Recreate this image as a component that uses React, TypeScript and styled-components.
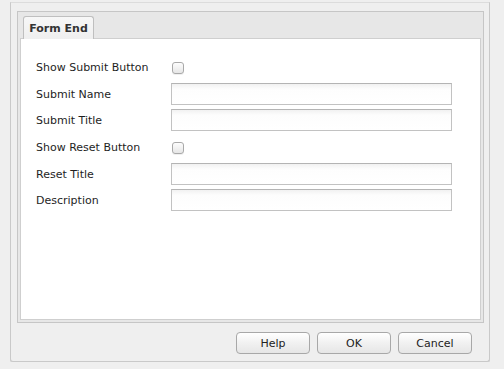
import React from "react";
import styled, { createGlobalStyle } from "styled-components";

const GlobalStyle = createGlobalStyle`
  html, body {
    margin: 0;
    padding: 0;
    background: #efefef;
    font-family: "DejaVu Sans", "Noto Sans", sans-serif;
    color: #222;
  }
`;

// dialog frame
const Frame = styled.div({
    boxSizing: 'border-box',
    width: '480px',
    height: '360px',
    margin: '2px 0 0 10px',
    border: '1px solid #c9c9c9',
    borderTopColor: '#dcdcdc',
    borderRadius: '0 0 3px 3px',
    boxShadow: '0 1px 0 #dadada',
    background: '#efefef',
    padding: '8px 5px 0 6px',
    display: 'flex',
    flexDirection: 'column',
})

const TabPanel = styled.div({
    boxSizing: 'border-box',
    height: '312px',
    border: '1px solid #c6c6c6',
    background: '#e7e7e7',
    display: 'flex',
    flexDirection: 'column',
    padding: '0 2px 2px 2px',
})

const TabStrip = styled.div({
    height: '26px',
    display: 'flex',
    alignItems: 'flex-end',
    padding: '0 0 0 3px',
})

const Tab = styled.div({
    boxSizing: 'border-box',
    width: '71px',
    height: '23px',
    marginBottom: '-1px',
    border: '1px solid #bfbfbf',
    borderBottom: 'none',
    borderRadius: '3px 3px 0 0',
    background: 'linear-gradient(#f7f7f7, #efefef)',
    fontSize: '11px',
    fontWeight: 'bold',
    color: '#333',
    display: 'flex',
    alignItems: 'center',
    justifyContent: 'center',
    position: 'relative',
    zIndex: 1,
})

const Content = styled.div({
    flex: 1,
    background: '#fff',
    border: '1px solid #cfcfcf',
    padding: '16px 0 0 15px',
})

const Form = styled.div({
    display: 'grid',
    gridTemplateColumns: '135px 281px',
    rowGap: '4px',
})

// checkbox rows are a little taller than text rows
const Label = styled.div<{ $tall?: boolean }>(props => ({
    height: props.$tall ? '24px' : '22px',
    display: 'flex',
    alignItems: 'center',
    fontSize: '11px',
    color: '#1e1e1e',
}))

const Field = styled.div<{ $tall?: boolean }>(props => ({
    height: props.$tall ? '24px' : '22px',
    display: 'flex',
    alignItems: 'center',
}))

const TextBox = styled.input({
    boxSizing: 'border-box',
    width: '281px',
    height: '22px',
    margin: 0,
    border: '1px solid #c2c2c2',
    borderTopColor: '#b4b4b4',
    background: 'linear-gradient(#f1f1f1, #fdfdfd 5px, #fff)',
    outline: 'none',
})

const CheckBox = styled.input({
    appearance: 'none',
    boxSizing: 'border-box',
    width: '12px',
    height: '12px',
    margin: '2px 0 0 1px',
    border: '1px solid #a9a9a9',
    borderRadius: '3px',
    background: 'linear-gradient(#fdfdfd, #e6e6e6)',
    boxShadow: '0 1px 0 #f0f0f0',
})

const Footer = styled.div({
    display: 'flex',
    justifyContent: 'flex-end',
    gap: '7px',
    padding: '9px 12px 0 0',
})

const Button = styled.button({
    boxSizing: 'border-box',
    width: '74px',
    height: '22px',
    border: '1px solid #a8a8a8',
    borderRadius: '4px',
    background: 'linear-gradient(#ffffff, #f1f1f1 50%, #e6e6e6)',
    fontFamily: '"DejaVu Sans", sans-serif',
    fontSize: '11px',
    color: '#222',
    padding: 0,
})

const rows: { label: string, kind: 'check' | 'text' }[] = [
    { label: 'Show Submit Button', kind: 'check' },
    { label: 'Submit Name', kind: 'text' },
    { label: 'Submit Title', kind: 'text' },
    { label: 'Show Reset Button', kind: 'check' },
    { label: 'Reset Title', kind: 'text' },
    { label: 'Description', kind: 'text' },
]

const App = () => {
    return <>
        <GlobalStyle/>
        <Frame>
            <TabPanel>
                <TabStrip>
                    <Tab>Form End</Tab>
                </TabStrip>
                <Content>
                    <Form>
                        {
                            rows.map(row => (
                                <React.Fragment key={row.label}>
                                    <Label $tall={row.kind === 'check'}>{row.label}</Label>
                                    <Field $tall={row.kind === 'check'}>
                                        {row.kind === 'check' ? <CheckBox type="checkbox"/> : <TextBox type="text"/>}
                                    </Field>
                                </React.Fragment>
                            ))
                        }
                    </Form>
                </Content>
            </TabPanel>
            <Footer>
                <Button>Help</Button>
                <Button>OK</Button>
                <Button>Cancel</Button>
            </Footer>
        </Frame>
    </>
}

export default App
